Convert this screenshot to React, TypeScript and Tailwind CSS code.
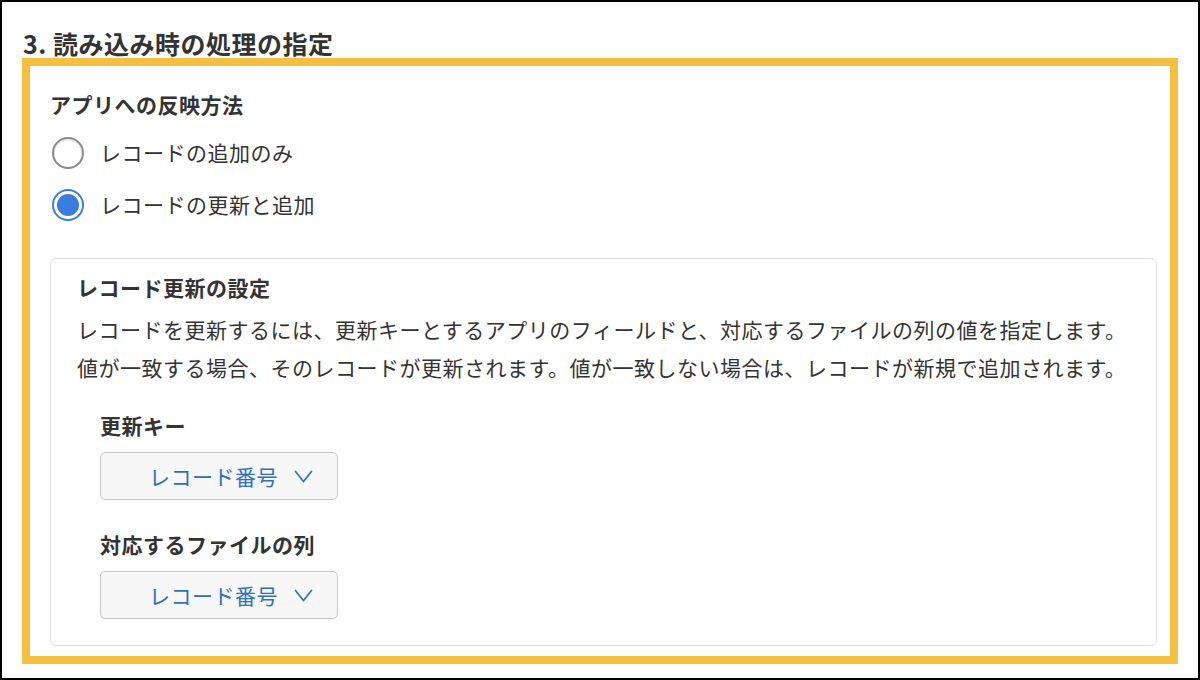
const font = "font-['Noto_Sans_CJK_JP',sans-serif]";

const methods = [
  { label: 'レコードの追加のみ', checked: false },
  { label: 'レコードの更新と追加', checked: true },
];

function Radio({ checked }: { checked: boolean }) {
  if (checked) {
    return (
      <span className="flex h-[32px] w-[32px] items-center justify-center rounded-full border-2 border-[#3b7ddd] bg-white">
        <span className="h-[22px] w-[22px] rounded-full bg-[#3b7ddd]" />
      </span>
    );
  }
  return (
    <span className="block h-[32px] w-[32px] rounded-full border-2 border-[#8a8a8a] bg-white shadow-[inset_0_1px_3px_rgba(0,0,0,0.12)]" />
  );
}

function FieldSelect({ value }: { value: string }) {
  return (
    <button
      type="button"
      className="flex h-[48px] w-[238px] items-center gap-[16px] rounded-[5px] border border-[#c8c8c8] bg-[#f7f7f7] pl-[48px] text-[21px] leading-none tracking-[0.5px] text-[#2f6fbf]"
    >
      <span>{value}</span>
      <svg width="19" height="14" viewBox="0 0 19 14" fill="none" className="mt-[2px]">
        <path d="M1.5 1.5 L9.5 11.5 L17.5 1.5" stroke="#2f6fbf" strokeWidth="1.7" strokeLinecap="round" strokeLinejoin="round" />
      </svg>
    </button>
  );
}

export default function App() {
  return (
    <div className={`${font} h-[680px] w-[1200px] border-2 border-black bg-white pt-[26px] tracking-[0.5px] text-[#333]`}>
      <h2 className="pl-[21px] text-[25px] font-bold leading-[30px]">3. 読み込み時の処理の指定</h2>

      <div className="mx-[20px] border-[8px] border-[#f5bf42] pb-[10px] pl-[20px] pr-[13px] pt-[23px]">
        <div className="text-[21px] font-bold leading-[30px]">アプリへの反映方法</div>

        <div className="mt-[18px] flex flex-col gap-[20px]">
          {methods.map((m) => (
            <label key={m.label} className="flex h-[32px] items-center gap-[16px] pl-[2px] text-[21px]">
              <Radio checked={m.checked} />
              <span>{m.label}</span>
            </label>
          ))}
        </div>

        <div className="mt-[37px] rounded-[6px] border border-[#dcdcdc] pb-[26px] pl-[26px] pt-[13px]">
          <div className="text-[21px] font-bold leading-[30px]">レコード更新の設定</div>
          <p className="mt-[8px] text-[21px] leading-[38px]">
            レコードを更新するには、更新キーとするアプリのフィールドと、対応するファイルの列の値を指定します。
            <br />
            値が一致する場合、そのレコードが更新されます。値が一致しない場合は、レコードが新規で追加されます。
          </p>

          <div className="ml-[23px]">
            <div className="mt-[24px] text-[21px] font-bold leading-[30px]">更新キー</div>
            <div className="mt-[12px]">
              <FieldSelect value="レコード番号" />
            </div>
            <div className="mt-[29px] text-[21px] font-bold leading-[30px]">対応するファイルの列</div>
            <div className="mt-[12px]">
              <FieldSelect value="レコード番号" />
            </div>
          </div>
        </div>
      </div>
    </div>
  );
}
